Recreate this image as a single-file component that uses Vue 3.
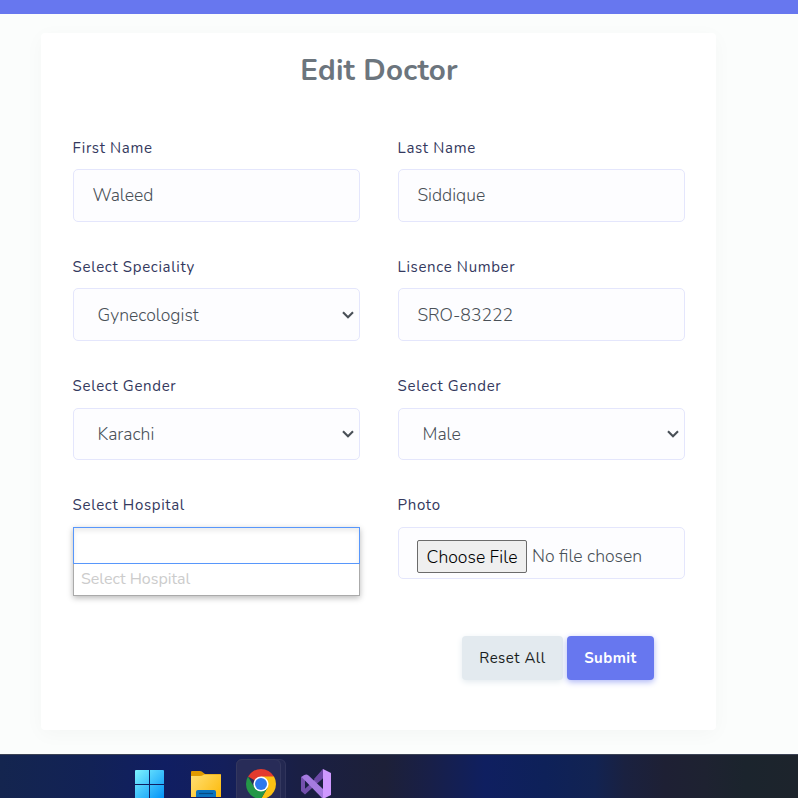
<script setup>
import { ref } from 'vue'

const fields = ref([
  { id: 'first', label: 'First Name', kind: 'text', value: 'Waleed' },
  { id: 'last', label: 'Last Name', kind: 'text', value: 'Siddique' },
  { id: 'speciality', label: 'Select Speciality', kind: 'select', value: 'Gynecologist' },
  { id: 'licence', label: 'Lisence Number', kind: 'text', value: 'SRO-83222' },
  { id: 'city', label: 'Select Gender', kind: 'select', value: 'Karachi' },
  { id: 'gender', label: 'Select Gender', kind: 'select', value: 'Male' },
  { id: 'hospital', label: 'Select Hospital', kind: 'search', value: '' },
  { id: 'photo', label: 'Photo', kind: 'file', value: '' },
])
</script>

<template>
  <div class="screen">
    <header class="topbar"></header>
    <main class="page">
      <form class="card" @submit.prevent>
        <h1 class="title">Edit Doctor</h1>
        <div class="grid">
          <div v-for="f in fields" :key="f.id" class="field">
            <label class="label">{{ f.label }}</label>
            <div v-if="f.kind === 'text'" class="control">
              <span>{{ f.value }}</span>
            </div>
            <div v-else-if="f.kind === 'select'" class="control select">
              <span>{{ f.value }}</span>
              <svg class="chevron" width="12" height="8" viewBox="0 0 12 8">
                <path d="M1 1.2 L6 6.2 L11 1.2" fill="none" stroke="#495057" stroke-width="2.1" />
              </svg>
            </div>
            <div v-else-if="f.kind === 'search'" class="picker">
              <div class="picker-input"></div>
              <div class="picker-list"><span>Select Hospital</span></div>
            </div>
            <div v-else class="control file">
              <button type="button" class="choose"><span>Choose File</span></button>
              <span class="nofile">No file chosen</span>
            </div>
          </div>
        </div>
        <div class="actions">
          <button type="button" class="btn reset"><span>Reset All</span></button>
          <button type="submit" class="btn submit"><span>Submit</span></button>
        </div>
      </form>
    </main>
    <footer class="taskbar">
      <svg class="win" width="29" height="29" viewBox="0 0 29 29">
        <defs>
          <linearGradient id="wg" x1="0" y1="0" x2="29" y2="29" gradientUnits="userSpaceOnUse">
            <stop offset="0" stop-color="#7df3ff" />
            <stop offset="1" stop-color="#0091f8" />
          </linearGradient>
        </defs>
        <path d="M1 0H14V14H0V1Q0 0 1 0ZM15 0H28Q29 0 29 1V14H15ZM0 15H14V29H0ZM15 15H29V29H15Z" fill="url(#wg)" />
      </svg>
      <svg class="folder" width="30" height="26" viewBox="0 0 30 26">
        <defs>
          <linearGradient id="fg" x1="0" y1="4" x2="30" y2="27" gradientUnits="userSpaceOnUse">
            <stop offset="0" stop-color="#ffdf72" />
            <stop offset="1" stop-color="#fdb909" />
          </linearGradient>
        </defs>
        <path d="M0 1Q0 0 1 0H9Q11 0 12 1.5L14 3H29Q30 3 30 4V8H0Z" fill="#e09a00" />
        <path d="M0 5H9Q11 5 12.5 4L13 3.5H30V26H0Z" fill="url(#fg)" />
        <path d="M5 26V21Q5 19 7 19H23Q25 19 25 21V26Z" fill="#0b73c0" />
        <path d="M8 22.5H22" stroke="#064b83" stroke-width="1.2" />
      </svg>
      <div class="tile-back">
        <div class="tile">
          <svg width="30" height="30" viewBox="0 0 30 30">
            <path d="M15 15L2.01 7.5A15 15 0 0 1 27.99 7.5Z" fill="#e33b2e" />
            <path d="M15 7.5H27.99A15 15 0 0 1 15 30L21.5 18.75Z" fill="#fcc112" />
            <path d="M2.01 7.5A15 15 0 0 0 15 30L21.5 18.75L15 15L8.5 18.75Z" fill="#249747" />
            <circle cx="15" cy="15" r="7.6" fill="#fff" />
            <circle cx="15" cy="15" r="6" fill="#2c79ec" />
          </svg>
        </div>
      </div>
      <svg class="vs" width="30" height="30" viewBox="0 0 30 30">
        <path d="M0 8L3.5 6L8 10.5V11L4 14.5V19.5L11 13.5L22 0V9L4 25.5L0 22Z" fill="#7450ad" />
        <path d="M4 11V19.5L8.8 15Z" fill="#1a1f43" />
        <path d="M3.5 6Q5.5 4.8 7.5 6.5L22 20V30L0.5 8Z" fill="#a57be0" />
        <path d="M13 10L22 0V9L17 13.5Z" fill="#6c48a6" />
        <path d="M22 0L30 4V26L22 30Z" fill="#cf98ff" />
      </svg>
    </footer>
  </div>
</template>

<style>
body {
  margin: 0;
}
</style>

<style scoped>
.screen {
  width: 798px;
  height: 798px;
  overflow: hidden;
  display: flex;
  flex-direction: column;
  background: #fbfdfc;
  font-family: Nunito, Lato, sans-serif;
}
.topbar {
  height: 14px;
  flex: none;
  background: #6777ef;
}
.page {
  height: 740px;
  box-sizing: border-box;
  padding: 19px 82px 24px 41px;
  flex: none;
}
.card {
  box-sizing: border-box;
  height: 697px;
  padding: 0 31px 0 32px;
  background: #fff;
  border-radius: 4px;
  box-shadow: 0 4px 20px rgba(0, 0, 0, 0.03);
}
.title {
  margin: 0;
  padding-top: 17px;
  height: 85px;
  line-height: 40px;
  font-size: 29.5px;
  font-weight: 700;
  color: #6c757d;
  text-align: center;
  letter-spacing: 0.2px;
}
.grid {
  display: grid;
  grid-template-columns: 287px 287px;
  column-gap: 38px;
  grid-auto-rows: 119.3px;
}
.field {
  display: flex;
  flex-direction: column;
}
.label {
  box-sizing: border-box;
  height: 34px;
  padding-top: 0.6px;
  margin-left: -0.4px;
  line-height: 24px;
  font-size: 15px;
  color: #34395e;
  letter-spacing: 0.66px;
  white-space: nowrap;
}
.control {
  box-sizing: border-box;
  height: 52.5px;
  display: flex;
  align-items: center;
  padding: 0 18.4px;
  font-size: 17.6px;
  font-weight: 300;
  color: #495057;
  background: #fdfdff;
  border: 1px solid #e4e6fc;
  border-radius: 5px;
}
.select {
  justify-content: space-between;
  padding: 0 5px 0 23.5px;
}
.picker {
  box-shadow: 0 2px 6px rgba(0, 0, 0, 0.28);
}
.picker-input {
  box-sizing: border-box;
  height: 37px;
  border: 1px solid #5897fb;
  background: #fff;
  box-shadow: inset 0 3px 5px rgba(0, 0, 0, 0.08);
}
.picker-list {
  box-sizing: border-box;
  height: 32px;
  padding: 0 7px;
  line-height: 30px;
  border: 1px solid #aaa;
  border-top: 0;
  background: #fff;
  color: #ccc;
  font-size: 16px;
}
.file {
  padding: 6px 18px 0;
  gap: 5px;
}
.choose {
  box-sizing: border-box;
  width: 110px;
  height: 33px;
  padding: 2px 0 0;
  border: 1px solid #6b6b6b;
  border-radius: 2px;
  background: #efefef;
  color: #000;
  font: inherit;
  white-space: nowrap;
}
.nofile {
  white-space: nowrap;
}
.actions {
  display: flex;
  justify-content: flex-end;
  gap: 4px;
  padding: 24px 31px 0 0;
}
.btn {
  height: 44px;
  padding: 0;
  border: 0;
  border-radius: 4px;
  font-family: inherit;
  font-size: 15px;
  white-space: nowrap;
}
.reset {
  width: 101px;
  color: #191d21;
  background: #e3eaef;
  box-shadow: 0 2px 6px #e3eaef;
  letter-spacing: 0.5px;
}
.submit {
  width: 87px;
  color: #fff;
  font-weight: 700;
  background: #6777ef;
  box-shadow: 0 2px 6px #acb5f6;
  letter-spacing: 0.45px;
}
.taskbar {
  box-sizing: border-box;
  flex: none;
  height: 44px;
  padding-left: 135px;
  display: flex;
  align-items: flex-start;
  border-top: 1px solid #3c4355;
  background: linear-gradient(90deg, #14254f 0, #122256 90px, #101e62 165px, #141f5b 225px, #1a1f44 300px, #1d2038 385px, #181f48 430px, #0f1f60 485px, #0e2159 545px, #122352 595px, #1a2140 625px, #1e2034 665px, #1e2231 705px, #1b242d 745px, #1d242c 798px);
}
.win {
  margin: 15px 27px 0 0;
}
.folder {
  margin: 16px 15px 0 0;
}
.tile-back {
  box-sizing: border-box;
  width: 50px;
  height: 50px;
  margin: 4px 15px 0 0;
  background: #232851;
  border: 1px solid #30345b;
  border-left: 0;
  border-radius: 6px;
}
.tile {
  box-sizing: border-box;
  width: 45px;
  height: 50px;
  margin-top: -1px;
  padding: 9px 0 0 9px;
  background: #282c58;
  border: 1px solid #34385f;
  border-radius: 6px;
}
.vs {
  margin-top: 14px;
}
</style>
